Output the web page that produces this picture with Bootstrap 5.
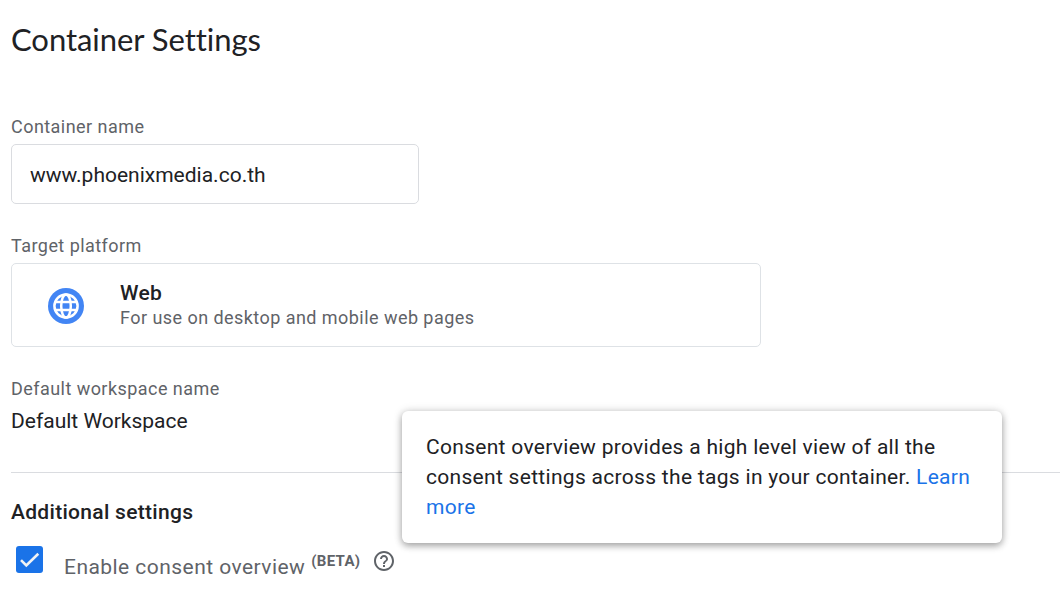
<!DOCTYPE html>
<html lang="en">
<head>
<meta charset="utf-8">
<meta name="viewport" content="width=device-width, initial-scale=1">
<title>Container Settings</title>
<link href="https://cdn.jsdelivr.net/npm/bootstrap@5.3.0/dist/css/bootstrap.min.css" rel="stylesheet">
<style>
body { font-family: Roboto, "Liberation Sans", sans-serif; font-size: 21px; line-height: 30px; color: #202124; overflow: hidden; }
.settings { padding: 17px 0 0 11px; }
.page-title { font-family: Lato, "Open Sans", sans-serif; font-size: 31px; line-height: 44px; letter-spacing: -.05px; margin-bottom: 54px; }
.field-label { font-size: 18px; line-height: 24px; letter-spacing: .45px; color: #5f6368; margin-bottom: 5px; }
.name-box { width: 408px; height: 60px; padding: 2px 18px 0; border-color: #dadce0; border-radius: 5px; font-size: 21px; color: #202124; margin-bottom: 30px; }
.platform { width: 750px; height: 84px; border-color: #dadce0; border-radius: 5px; padding-left: 36px; gap: 36px; margin-bottom: 30px; }
.globe { margin-top: 2px; }
.platform-name { font-weight: 500; line-height: 26px; letter-spacing: .3px; }
.platform-note { font-size: 18px; line-height: 24px; letter-spacing: .45px; color: #5f6368; }
.workspace { margin-bottom: 36px; }
.rule { border-top: 1px solid #dadce0; margin-bottom: 24px; }
.section-title { font-size: 21px; line-height: 30px; font-weight: 500; letter-spacing: .3px; margin-bottom: 19px; }
.consent { padding-left: 5px; }
.check { width: 27px; height: 27px; }
.consent-label { color: #5f6368; letter-spacing: .45px; margin: 6px 0 0 21px; }
.beta { font-size: 15px; line-height: 20px; font-weight: 700; letter-spacing: .3px; color: #5f6368; margin: 5px 0 0 6px; }
.help { width: 24px; height: 24px; margin: 3px 0 0 12px; }
.tip { left: 402px; top: 411px; width: 600px; height: 132px; padding: 21px 24px; border-radius: 6px; letter-spacing: .3px; box-shadow: 0 3px 7px rgba(0,0,0,.3), 0 0 10px rgba(0,0,0,.15); }
.tip a { color: #1a73e8; }
</style>
</head>
<body class="position-relative bg-white">
<main class="settings">
  <h1 class="page-title fw-normal">Container Settings</h1>
  <label class="field-label d-block" for="name">Container name</label>
  <input class="form-control name-box" id="name" type="text" value="www.phoenixmedia.co.th">
  <div class="field-label">Target platform</div>
  <div class="platform border d-flex align-items-center">
    <svg class="globe" width="36" height="36" viewBox="0 0 36 36" aria-hidden="true">
      <circle cx="18" cy="18" r="18" fill="#4285f4"/>
      <g fill="none" stroke="#fff" stroke-width="2.5">
        <circle cx="18" cy="18" r="11.6"/>
        <ellipse cx="18" cy="18" rx="4.8" ry="11.6"/>
        <path d="M7.500 14h21M7.500 22h21"/>
      </g>
    </svg>
    <div>
      <div class="platform-name">Web</div>
      <div class="platform-note">For use on desktop and mobile web pages</div>
    </div>
  </div>
  <div class="field-label">Default workspace name</div>
  <div class="workspace">Default Workspace</div>
  <div class="rule"></div>
  <h2 class="section-title">Additional settings</h2>
  <div class="consent d-flex align-items-start">
    <svg class="check" viewBox="0 0 27 27" role="img" aria-label="Enabled">
      <rect width="27" height="27" rx="3" fill="#1a73e8"/>
      <path d="M5 14.2l5.3 5.3L22.3 7.7" fill="none" stroke="#f1f3f4" stroke-width="2.6"/>
    </svg>
    <span class="consent-label">Enable consent overview</span>
    <span class="beta">(BETA)</span>
    <svg class="help" viewBox="0 0 24 24" fill="#5f6368" aria-label="Help" role="img">
      <path d="M11 18h2v-2h-2v2zm1-16C6.48 2 2 6.48 2 12s4.480 10 10 10 10-4.480 10-10S17.520 2 12 2zm0 18c-4.410 0-8-3.590-8-8s3.590-8 8-8 8 3.590 8 8-3.590 8-8 8zm0-14c-2.210 0-4 1.790-4 4h2c0-1.100.9-2 2-2s2 .9 2 2c0 2-3 1.750-3 5h2c0-2.250 3-2.500 3-5 0-2.210-1.790-4-4-4z"/>
    </svg>
  </div>
</main>
<div class="tip position-absolute bg-white" role="tooltip">Consent overview provides a high level view of all the consent settings across the tags in your container. <a class="text-decoration-none" href="#">Learn more</a></div>
<script src="https://cdn.jsdelivr.net/npm/bootstrap@5.3.0/dist/js/bootstrap.bundle.min.js"></script>
</body>
</html>
